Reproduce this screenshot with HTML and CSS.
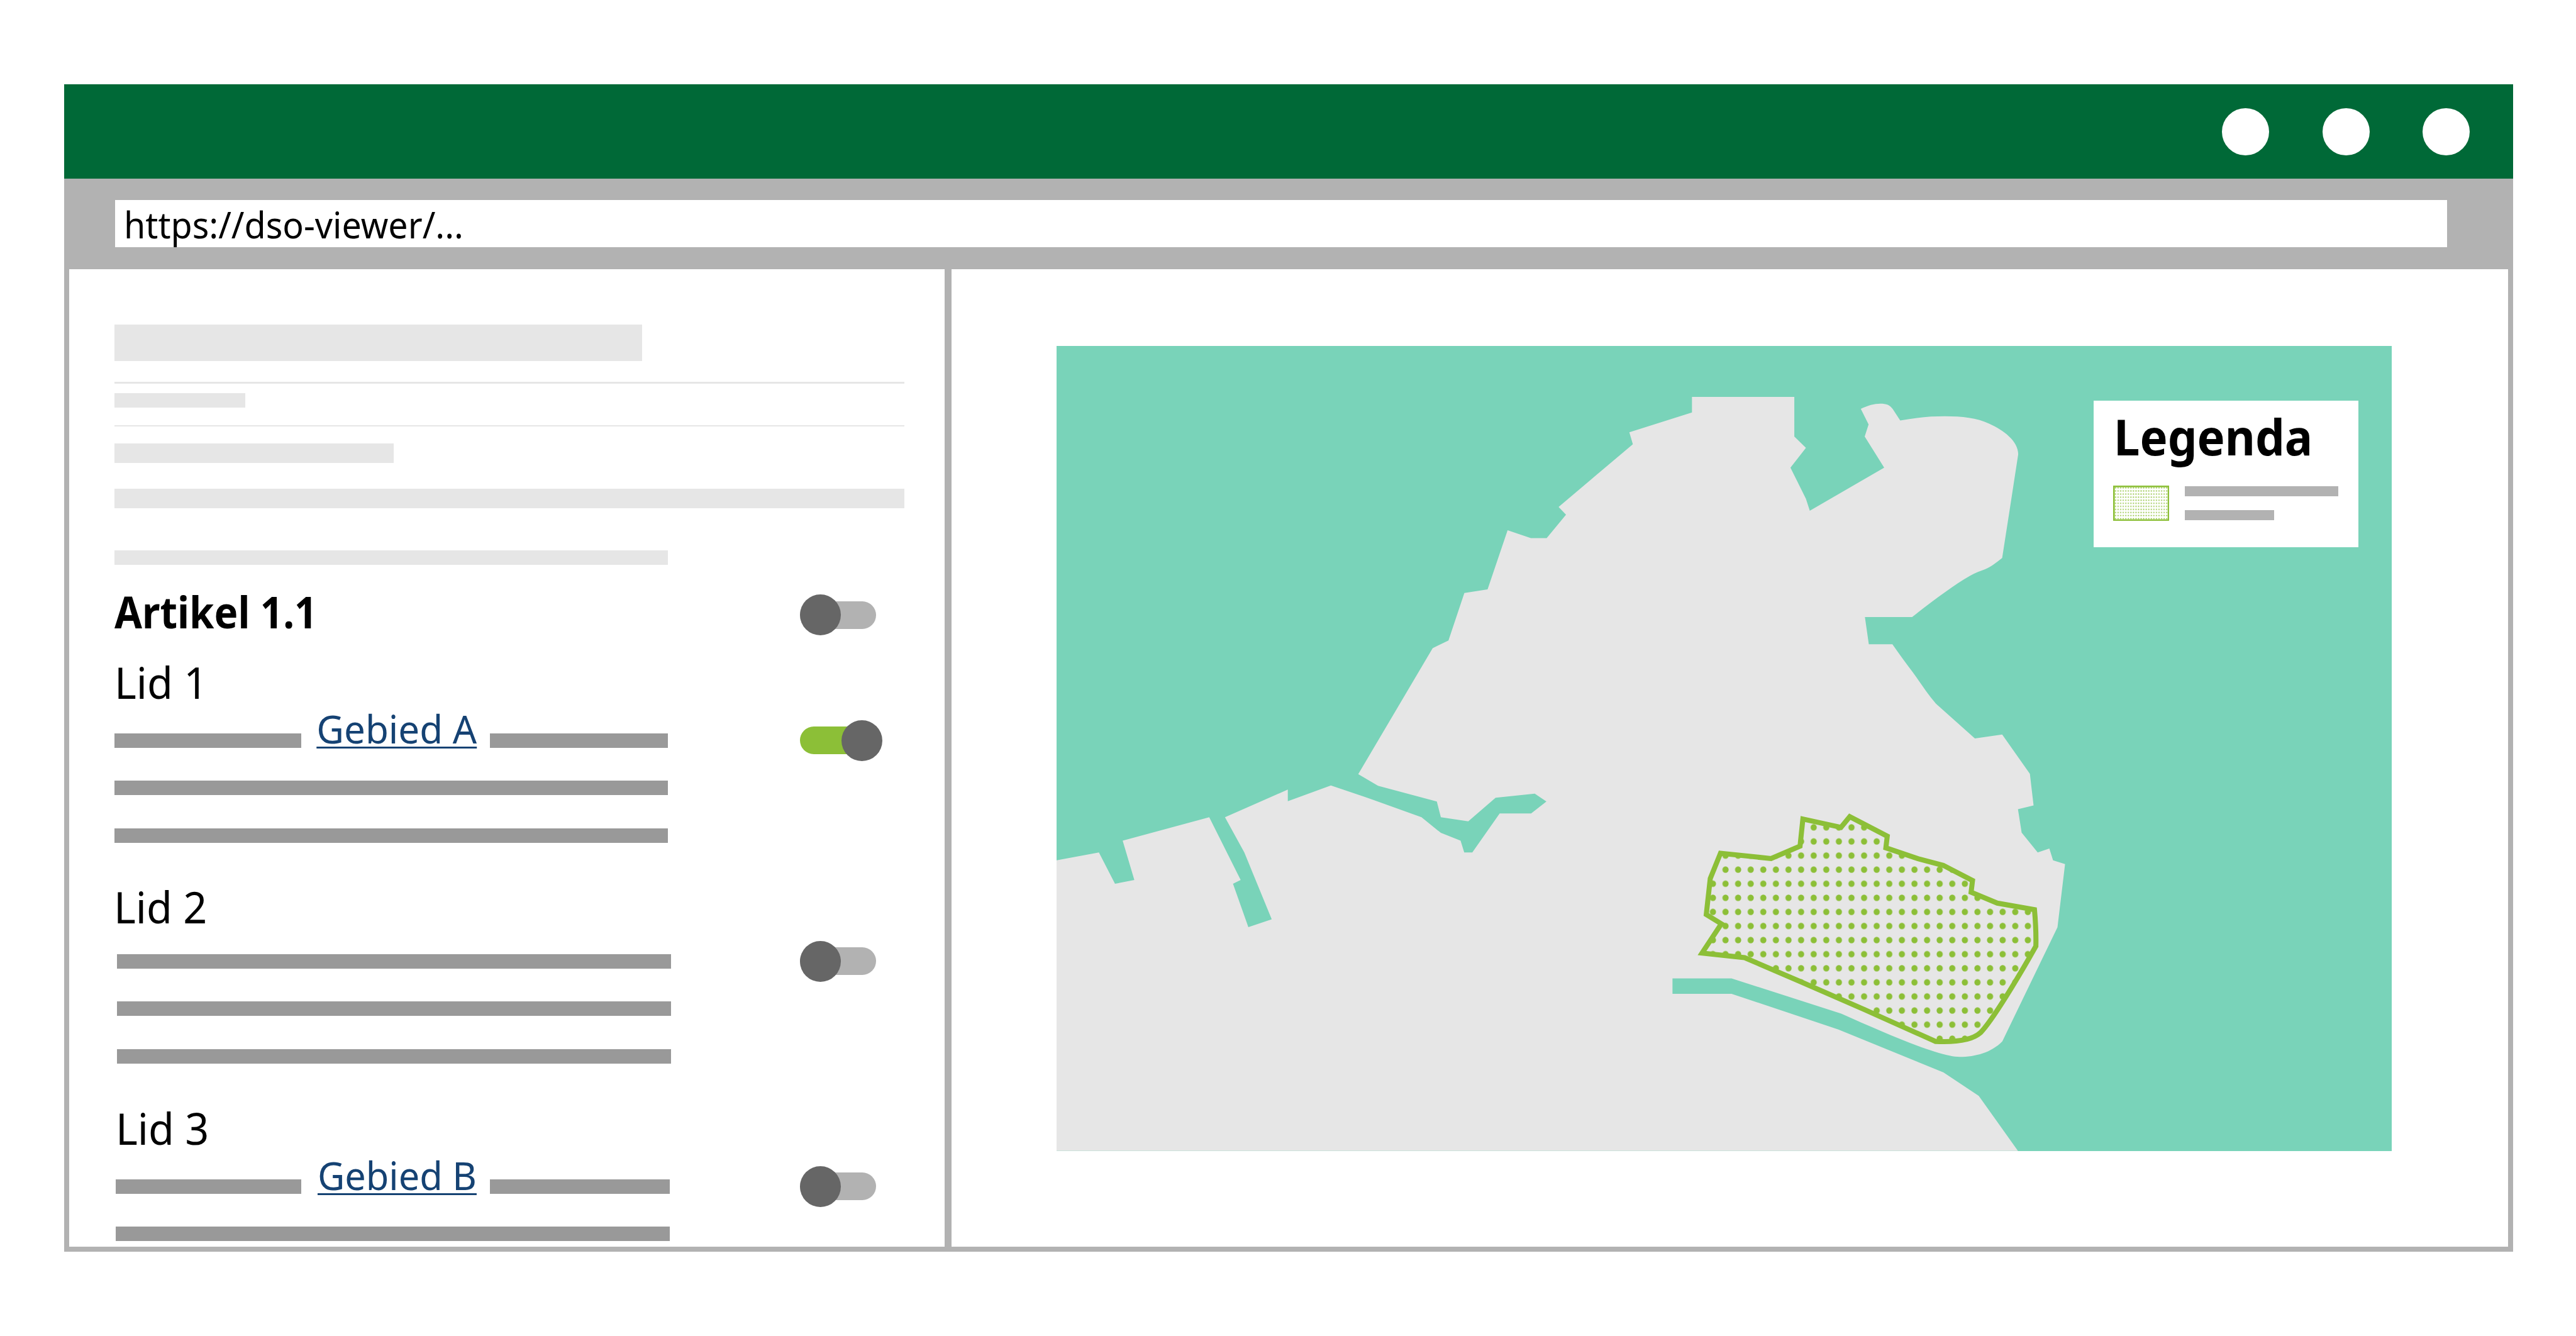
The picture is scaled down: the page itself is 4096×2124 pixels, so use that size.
FILE: index.html
```html
<!DOCTYPE html>
<html lang="nl">
<head>
<meta charset="utf-8">
<title>DSO-viewer</title>
<link rel="stylesheet" href="styles.css">
</head>
<body>
<div class="window">
  <header class="titlebar">
    <span class="dot"></span>
    <span class="dot"></span>
    <span class="dot"></span>
  </header>
  <div class="addressbar">
    <div class="url"><span class="url-text">https://dso-viewer/...</span></div>
  </div>
  <div class="content">
    <aside class="sidebar">
      <div class="intro">
        <div class="block block-title"></div>
        <div class="rule rule-first"></div>
        <div class="block block-tag"></div>
        <div class="rule rule-second"></div>
        <div class="block block-subtitle"></div>
        <div class="block block-wide"></div>
        <div class="block block-text"></div>
      </div>

      <div class="row row-article">
        <h1 class="article">Artikel 1.1</h1>
        <span class="toggle"><span class="knob"></span></span>
      </div>

      <section class="lid lid-1">
        <h2 class="lid-title">Lid 1</h2>
        <div class="row">
          <div class="inline-line">
            <span class="line line-before"></span>
            <a class="area">Gebied A</a>
            <span class="line line-after"></span>
          </div>
          <span class="toggle toggle-on"><span class="knob"></span></span>
        </div>
        <div class="line line-full line-second"></div>
        <div class="line line-full line-third"></div>
      </section>

      <section class="lid lid-2">
        <h2 class="lid-title">Lid 2</h2>
        <div class="row">
          <span class="line line-full"></span>
          <span class="toggle"><span class="knob"></span></span>
        </div>
        <div class="line line-full line-second"></div>
        <div class="line line-full line-third"></div>
      </section>

      <section class="lid lid-3">
        <h2 class="lid-title">Lid 3</h2>
        <div class="row">
          <div class="inline-line">
            <span class="line line-before"></span>
            <a class="area">Gebied B</a>
            <span class="line line-after"></span>
          </div>
          <span class="toggle"><span class="knob"></span></span>
        </div>
        <div class="line line-full line-second"></div>
      </section>
    </aside>

    <main class="viewer">
      <div class="map">
        <svg class="map-canvas" viewBox="2491.3 814.3 3145.9 1896.8" preserveAspectRatio="none">
          <defs>
            <pattern id="dots" patternUnits="userSpaceOnUse" x="4260.85" y="1932.1" width="29.69" height="33.2">
              <ellipse cx="14.85" cy="16.6" rx="7.3" ry="7.7" class="area-dot"/>
            </pattern>
          </defs>
          <path class="land" d="M3202.3 1823.4L3377.7 1526.5 3415 1508.2 3452.4 1396.4 3507.1 1388 3554.3 1248.7 3609.1 1267.1 3646.4 1267.1 3692 1212 3674.5 1193.6 3849.5 1045.9 3841.2 1017.6 3988.8 970.9 3988.8 934.2 4230 934.2 4230 1027.6 4257.4 1054.3 4220.9 1101 4257.4 1174.5 4266.5 1202.8 4441.8 1101 4395.9 1027.6 4405.1 999.2 4386.7 962.5C4404 954.5 4418 950.3 4432.7 950.3 4447 950.3 4455 953 4462.2 963.3L4479.6 990C4515 983 4550 980.1 4585.2 980.1 4625 980.1 4660 984 4689.8 997.7 4722 1012 4757.7 1038 4757.7 1069.6L4736.7 1205.9 4719.9 1313.8C4706 1325 4693 1335 4679.6 1340.6 4668 1345 4656 1349 4643.9 1355.9 4605 1378 4556 1415 4507.7 1453.1L4396.4 1453.1 4405.6 1517.4 4461.2 1517.4C4477 1540 4492 1561 4509.2 1583.2 4528 1609 4544 1634 4563.8 1657.4L4655.6 1739.3 4719.9 1730.1 4785.2 1822.7 4793.9 1896.9 4757.1 1906.1 4765.8 1961.2 4803.6 2007.9 4831.1 1998.7 4839.8 2026.3 4868.1 2035.4 4850.2 2184.1 4720.3 2452.7C4695 2479 4657 2489.4 4619.9 2489.4 4612 2489.4 4604 2488.6 4597.8 2487.1 4535 2474 4440 2432 4340.6 2387.8L4082.1 2304.6 3942.9 2304.6 3942.9 2340.8 4082.1 2340.8 4333.9 2425.1 4581.7 2526.1 4664.7 2581.3 4757.1 2711.2 2491.3 2711.2 2491.3 2026.2 2591.1 2007.7 2629 2081.6 2674.6 2072.7 2647.1 1980.2 2851.1 1924.7 2925.2 2072.7 2907.1 2081.6 2943.3 2183.7 2998.4 2165.2 2933.8 2007.7 2888.2 1924.7 3036.3 1859.7 3036.3 1887.1 3137.8 1850.1 3217.9 1876.9 3351.4 1924.7 3397 1961.7 3443.5 1980.2 3452.1 2007.7 3471.1 2007.7 3535.6 1915.8 3609.7 1915.8 3645.8 1887.8 3618.3 1869.3 3526.1 1878.8 3461.6 1934.3 3397 1924.7 3387.5 1887.8 3248.9 1850.8Z"/>
          <path class="region" d="M4250.2 1929.2L4340 1948.7 4360.7 1923.5 4449.1 1969.4 4445.8 1996.9 4524.1 2023.3 4581 2038.3 4650 2073.9 4646.7 2101.4 4708.3 2127.2 4796 2142.7C4798.5 2170 4800 2200 4799.3 2228.8 4757.2 2303.4 4696.9 2403.9 4668.7 2432.6 4646.7 2452.7 4603.1 2455 4563 2453.2L4395.5 2378.1 4241.5 2310.9 4112.9 2255.8 4012.5 2244.9 4058 2176 4022.5 2154.2 4031.9 2069.3 4056 2009.6 4175.2 2022.2 4243.5 1992.9Z"/>
        </svg>
        <div class="legend">
          <h3 class="legend-title">Legenda</h3>
          <div class="legend-item">
            <svg class="swatch" viewBox="0 0 132.5 83.4">
              <defs>
                <pattern id="swatch-dots" patternUnits="userSpaceOnUse" x="2.68" y="1.8" width="6.03" height="7.25">
                  <circle cx="3.015" cy="3.625" r="1.6" class="area-dot"/>
                </pattern>
              </defs>
              <rect class="swatch-box" x="1.95" y="1.95" width="128.6" height="79.5"/>
            </svg>
            <div class="legend-lines">
              <span class="legend-line"></span>
              <span class="legend-line legend-line-short"></span>
            </div>
          </div>
        </div>
      </div>
    </main>
  </div>
</div>
</body>
</html>
```
FILE: styles.css
```css
:root {
  --green: #006937;
  --grey: #b2b2b2;
  --light: #e6e6e6;
  --line: #999;
  --knob: #666;
  --lime: #8cbf37;
  --water: #79d3b9;
  --link: #154273;
  font-size: 67.468px;
}

* {
  box-sizing: border-box;
}

body {
  margin: 0;
  padding: 1.99rem 0 0 1.51rem;
  background: #fff;
  color: #000;
  font-family: "Noto Sans", "Open Sans", sans-serif;
  overflow: hidden;
}

h1, h2, h3 {
  margin: 0;
  font-weight: 400;
}

.window {
  display: flex;
  flex-direction: column;
  width: 57.715rem;
  height: 27.5rem;
}

/* Browser chrome */
.titlebar {
  display: flex;
  flex: none;
  align-items: center;
  justify-content: flex-end;
  gap: 1.255rem;
  height: 2.22rem;
  padding-right: 1.017rem;
  background: var(--green);
}

.dot {
  width: 1.11rem;
  height: 1.11rem;
  border-radius: 50%;
  background: #fff;
}

.addressbar {
  display: flex;
  flex: none;
  align-items: center;
  height: 2.13rem;
  padding: 0 1.546rem 0 1.207rem;
  background: var(--grey);
}

.url {
  flex: 1;
  height: 1.11rem;
  padding-left: 0.198rem;
  background: #fff;
  font-size: 0.87rem;
  line-height: 1.13rem;
}

.url-text {
  display: inline-block;
  transform: scaleX(0.947);
  transform-origin: left;
}

.content {
  display: flex;
  flex: 1;
  min-height: 0;
  border: solid var(--grey);
  border-width: 0 0.13rem 0.127rem 0.13rem;
}

/* Regulation text column */
.sidebar {
  flex: none;
  width: 20.79rem;
  padding: 1.31rem 0 0 1.063rem;
  border-right: 0.168rem solid var(--grey);
}

.block,
.rule {
  background: var(--light);
}

.rule {
  width: 18.62rem;
  height: 0.037rem;
}

.rule-first { margin-top: 0.484rem; }
.rule-second { margin-top: 0.411rem; }

.block-title {
  width: 12.445rem;
  height: 0.865rem;
}

.block-tag {
  width: 3.086rem;
  height: 0.337rem;
  margin-top: 0.235rem;
}

.block-subtitle {
  width: 6.58rem;
  height: 0.463rem;
  margin-top: 0.396rem;
}

.block-wide {
  width: 18.62rem;
  height: 0.462rem;
  margin-top: 0.608rem;
}

.block-text {
  width: 13.05rem;
  height: 0.339rem;
  margin-top: 0.986rem;
}

.row {
  display: flex;
  align-items: center;
  justify-content: space-between;
  width: 18.11rem;
  height: 0.964rem;
}

.row-article {
  align-items: flex-start;
  margin-top: 0.7rem;
}

.article {
  font-size: 1.03rem;
  font-weight: 700;
  line-height: 0.81rem;
  transform: scaleX(0.915);
  transform-origin: left;
}

.toggle {
  display: flex;
  flex: none;
  align-items: center;
  width: 1.796rem;
  height: 0.65rem;
  margin-right: 0.154rem;
  border-radius: 0.325rem;
  background: var(--grey);
}

.row-article .toggle {
  align-self: center;
}

.toggle-on {
  width: 1.95rem;
  margin-right: 0;
  justify-content: flex-end;
  background: linear-gradient(90deg, var(--lime) 1.5rem, transparent 1.5rem);
}

.knob {
  flex: none;
  width: 0.964rem;
  height: 0.964rem;
  border-radius: 50%;
  background: var(--knob);
}

.lid-title {
  height: 1.1rem;
  font-size: 1.03rem;
  line-height: 1.12rem;
  transform: scaleX(0.957);
  transform-origin: left;
}

.line {
  display: block;
  flex: none;
  height: 0.341rem;
  background: var(--line);
}

.line-full { width: 13.048rem; }
.line-second { margin-top: 0.466rem; }
.line-third { margin-top: 0.78rem; }
.line-before { width: 4.405rem; }
.line-after { width: 4.195rem; }

.inline-line {
  display: flex;
  align-items: center;
  justify-content: space-between;
  width: 13.048rem;
  height: 100%;
}

.area {
  align-self: flex-start;
  width: 4.448rem;
  padding-left: 0.36rem;
  color: var(--link);
  font-size: 0.925rem;
  line-height: 0.38rem;
  white-space: nowrap;
  text-decoration: underline;
  text-decoration-thickness: 0.046rem;
  text-underline-offset: 0.08rem;
  text-decoration-skip-ink: none;
  transform: scaleX(0.963);
  transform-origin: 0.36rem 0;
}

.lid-1 { margin-top: 0.554rem; }
.lid-1 .row { margin-top: 0.344rem; }

.lid-2 {
  margin-top: 0.951rem;
  padding-left: 0.07rem;
}
.lid-2 .lid-title { margin-left: -0.084rem; }
.lid-2 .row {
  width: 18.04rem;
  margin-top: 0.256rem;
}

.lid-3 {
  margin-top: 0.971rem;
  padding-left: 0.042rem;
}
.lid-3 .row {
  width: 18.068rem;
  margin-top: 0.346rem;
}
.lid-3 .line-before { width: 4.363rem; }
.lid-3 .line-after { width: 4.237rem; }
.lid-3 .area {
  padding-left: 0.385rem;
  line-height: 0.42rem;
  transform: scaleX(0.953);
  transform-origin: 0.385rem 0;
}

/* Map */
.viewer {
  flex: 1;
  padding: 1.813rem 0 0 2.488rem;
}

.map {
  position: relative;
  width: 31.459rem;
  height: 18.968rem;
  background: var(--water);
}

.map-canvas {
  display: block;
  width: 100%;
  height: 100%;
}

.land { fill: var(--light); }
.area-dot { fill: var(--lime); }

.region {
  fill: url(#dots);
  stroke: var(--lime);
  stroke-width: 11.9;
  stroke-miterlimit: 10;
}

.legend {
  position: absolute;
  top: 1.293rem;
  right: 0.788rem;
  width: 6.237rem;
  height: 3.444rem;
  padding: 0.263rem 0 0 0.46rem;
  background: #fff;
}

.legend-title {
  margin-left: 0.017rem;
  height: 1.735rem;
  font-size: 1.16rem;
  font-weight: 700;
  line-height: 1.16rem;
  transform: scaleX(0.947);
  transform-origin: left;
}

.legend-item {
  display: flex;
  gap: 0.365rem;
}

.swatch {
  width: 1.325rem;
  height: 0.834rem;
}

.swatch-box {
  fill: url(#swatch-dots);
  stroke: var(--lime);
  stroke-width: 3.9;
}

.legend-lines {
  display: flex;
  flex-direction: column;
  gap: 0.329rem;
  padding-top: 0.018rem;
}

.legend-line {
  width: 3.613rem;
  height: 0.237rem;
  background: var(--grey);
}

.legend-line-short {
  width: 2.105rem;
}
```
